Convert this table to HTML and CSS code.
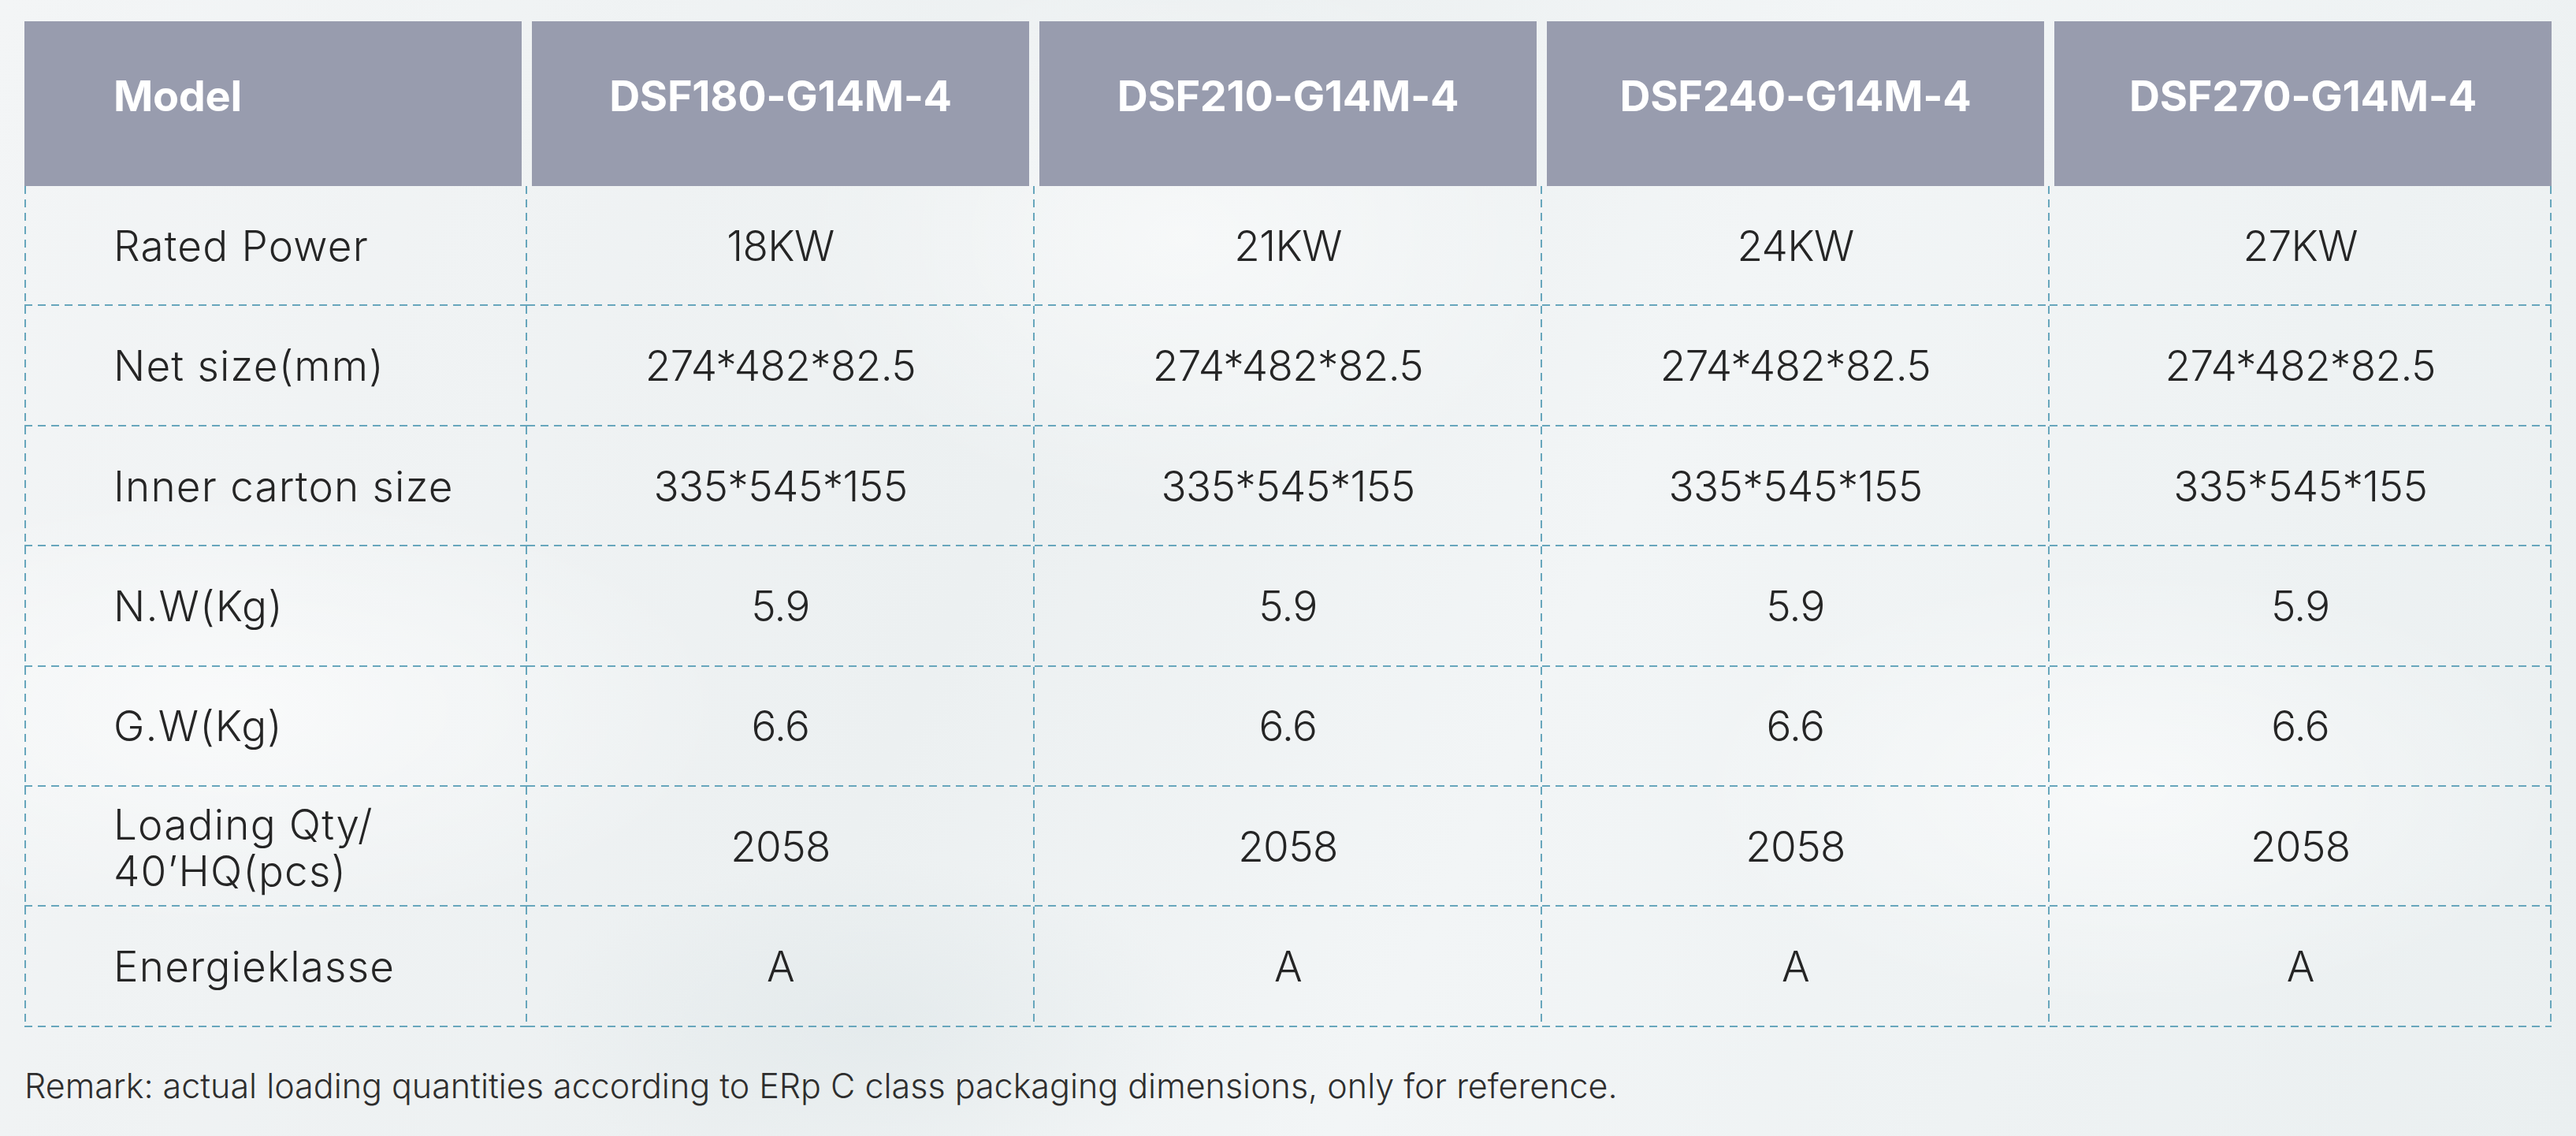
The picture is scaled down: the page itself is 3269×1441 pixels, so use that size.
FILE: index.html
```html
<!DOCTYPE html>
<html lang="en">
<head>
<meta charset="utf-8">
<title>Specifications</title>
<link rel="stylesheet" href="styles.css">
</head>
<body>
<main class="page">
  <section class="spec">
    <div class="head">
      <div class="hcell label">Model</div>
      <div class="hcell">DSF180-G14M-4</div>
      <div class="hcell">DSF210-G14M-4</div>
      <div class="hcell">DSF240-G14M-4</div>
      <div class="hcell">DSF270-G14M-4</div>
    </div>
    <div class="rows">
      <div class="row">
        <div class="cell label">Rated Power</div>
        <div class="cell">18KW</div>
        <div class="cell">21KW</div>
        <div class="cell">24KW</div>
        <div class="cell">27KW</div>
      </div>
      <div class="row">
        <div class="cell label">Net size(mm)</div>
        <div class="cell">274*482*82.5</div>
        <div class="cell">274*482*82.5</div>
        <div class="cell">274*482*82.5</div>
        <div class="cell">274*482*82.5</div>
      </div>
      <div class="row">
        <div class="cell label">Inner carton size</div>
        <div class="cell">335*545*155</div>
        <div class="cell">335*545*155</div>
        <div class="cell">335*545*155</div>
        <div class="cell">335*545*155</div>
      </div>
      <div class="row">
        <div class="cell label">N.W(Kg)</div>
        <div class="cell">5.9</div>
        <div class="cell">5.9</div>
        <div class="cell">5.9</div>
        <div class="cell">5.9</div>
      </div>
      <div class="row">
        <div class="cell label">G.W(Kg)</div>
        <div class="cell">6.6</div>
        <div class="cell">6.6</div>
        <div class="cell">6.6</div>
        <div class="cell">6.6</div>
      </div>
      <div class="row">
        <div class="cell label two">Loading Qty/<br>40’HQ(pcs)</div>
        <div class="cell">2058</div>
        <div class="cell">2058</div>
        <div class="cell">2058</div>
        <div class="cell">2058</div>
      </div>
      <div class="row">
        <div class="cell label">Energieklasse</div>
        <div class="cell">A</div>
        <div class="cell">A</div>
        <div class="cell">A</div>
        <div class="cell">A</div>
      </div>
    </div>
  </section>
  <p class="remark">Remark: actual loading quantities according to ERp C class packaging dimensions, only for reference.</p>
</main>
</body>
</html>
```
FILE: styles.css
```css
html, body {
  margin: 0;
  padding: 0;
}

body {
  width: 3269px;
  height: 1441px;
  overflow: hidden;
  font-family: "Inter", "Open Sans", "Liberation Sans", sans-serif;
  color: #252525;
  background-color: #f0f3f4;
  background-image:
    radial-gradient(ellipse 900px 400px at 300px 900px, rgba(255,255,255,0.6), rgba(255,255,255,0) 70%),
    radial-gradient(ellipse 700px 500px at 1500px 300px, rgba(255,255,255,0.55), rgba(255,255,255,0) 70%),
    radial-gradient(ellipse 800px 400px at 2700px 1000px, rgba(255,255,255,0.55), rgba(255,255,255,0) 70%),
    radial-gradient(ellipse 600px 300px at 1100px 1300px, rgba(222,230,232,0.55), rgba(222,230,232,0) 70%),
    linear-gradient(115deg, #f3f5f6 0%, #ecf0f1 40%, #f2f5f6 60%, #eaeff0 100%);
}

.page {
  padding: 27px 31px 0 31px;
}

.spec {
  width: 3207px;
}

.head {
  display: grid;
  grid-template-columns: repeat(5, 1fr);
  column-gap: 13px;
  height: 209px;
}

.hcell {
  background: #989cae;
  color: #ffffff;
  font-weight: 700;
  font-size: 54px;
  letter-spacing: -0.3px;
  display: flex;
  align-items: center;
  justify-content: center;
  padding-bottom: 20px;
  box-sizing: border-box;
}

.hcell.label {
  justify-content: flex-start;
  padding-left: 113px;
}

.rows {
  display: flex;
  flex-direction: column;
}

.row {
  display: grid;
  grid-template-columns: 637.5px 644px 644px 644px 637.5px;
  height: 152.4px;
}

.cell {
  --dash: #67a6bc;
  display: flex;
  align-items: center;
  justify-content: center;
  font-size: 53px;
  font-weight: 300;
  line-height: 1.15;
  letter-spacing: -0.6px;
  box-sizing: border-box;
  background-image:
    repeating-linear-gradient(to right, var(--dash) 0 10px, transparent 10px 17px),
    repeating-linear-gradient(to bottom, var(--dash) 0 10px, transparent 10px 17px);
  background-size: 100% 2px, 2px 100%;
  background-position: left bottom, right top;
  background-repeat: no-repeat;
}

.cell.label {
  justify-content: flex-start;
  padding-left: 113px;
  letter-spacing: 1.2px;
  background-image:
    repeating-linear-gradient(to right, var(--dash) 0 10px, transparent 10px 17px),
    repeating-linear-gradient(to bottom, var(--dash) 0 10px, transparent 10px 17px),
    repeating-linear-gradient(to bottom, var(--dash) 0 10px, transparent 10px 17px);
  background-size: 100% 2px, 2px 100%, 2px 100%;
  background-position: left bottom, right top, left top;
}

.cell.two {
  line-height: 1.12;
  padding-top: 4px;
}

.remark {
  margin: 48px 0 0 0;
  font-size: 43px;
  font-weight: 300;
  color: #2e2e2e;
}
```
